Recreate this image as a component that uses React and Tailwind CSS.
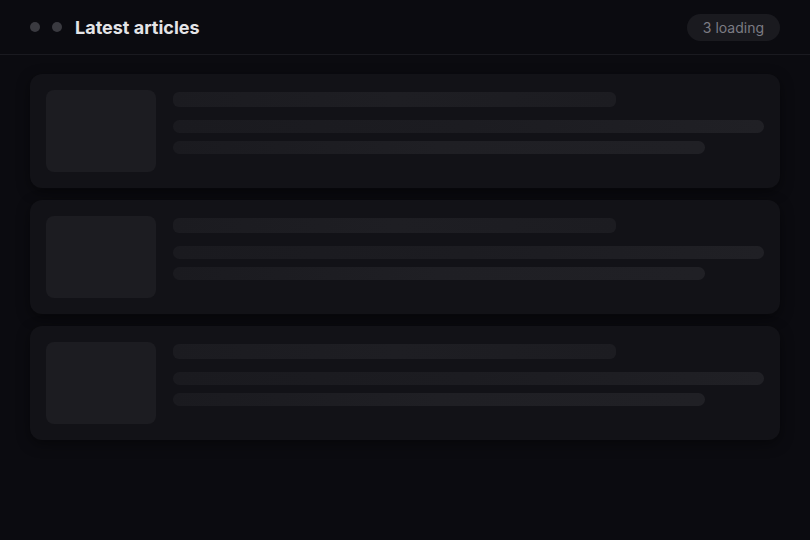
import React from 'react';

const SkeletonCard = () => (
  <div className="flex gap-[17px] rounded-xl bg-[#121217] p-4 shadow-[0_4px_14px_rgba(0,0,0,0.45)]">
    <div className="h-[82px] w-[110px] shrink-0 rounded-lg bg-[#1c1c21]" />
    <div className="flex flex-1 flex-col pt-[2px]">
      <div className="h-[15px] w-[75%] rounded-md bg-gradient-to-r from-[#1b1b20] via-[#1e1e23] to-[#1c1c21]" />
      <div className="mt-[13px] h-[13px] w-full rounded-full bg-gradient-to-r from-[#1a1a1f] via-[#1c1c21] to-[#202025]" />
      <div className="mt-[8px] h-[13px] w-[90%] rounded-full bg-gradient-to-r from-[#1a1a1f] via-[#1f1f24] to-[#202025]" />
    </div>
  </div>
);

export default function App() {
  return (
    <div className="min-h-[540px] w-full bg-[#0b0b10] font-['Inter',sans-serif]">
      <div className="flex h-[55px] items-center justify-between border-b border-[#1a1a20] px-[30px]">
        <div className="flex items-center">
          <span className="h-[10px] w-[10px] rounded-full bg-[#3a3a40]" />
          <span className="ml-3 h-[10px] w-[10px] rounded-full bg-[#3a3a40]" />
          <h1 className="ml-[13px] text-[18px] font-bold text-[#e4e4e7]">Latest articles</h1>
        </div>
        <span className="rounded-full bg-[#1a1a1f] px-4 py-[3px] text-[14px] text-[#7c7c84]">3 loading</span>
      </div>
      <div className="flex flex-col gap-3 px-[30px] pt-[19px]">
        <SkeletonCard />
        <SkeletonCard />
        <SkeletonCard />
      </div>
    </div>
  );
}
